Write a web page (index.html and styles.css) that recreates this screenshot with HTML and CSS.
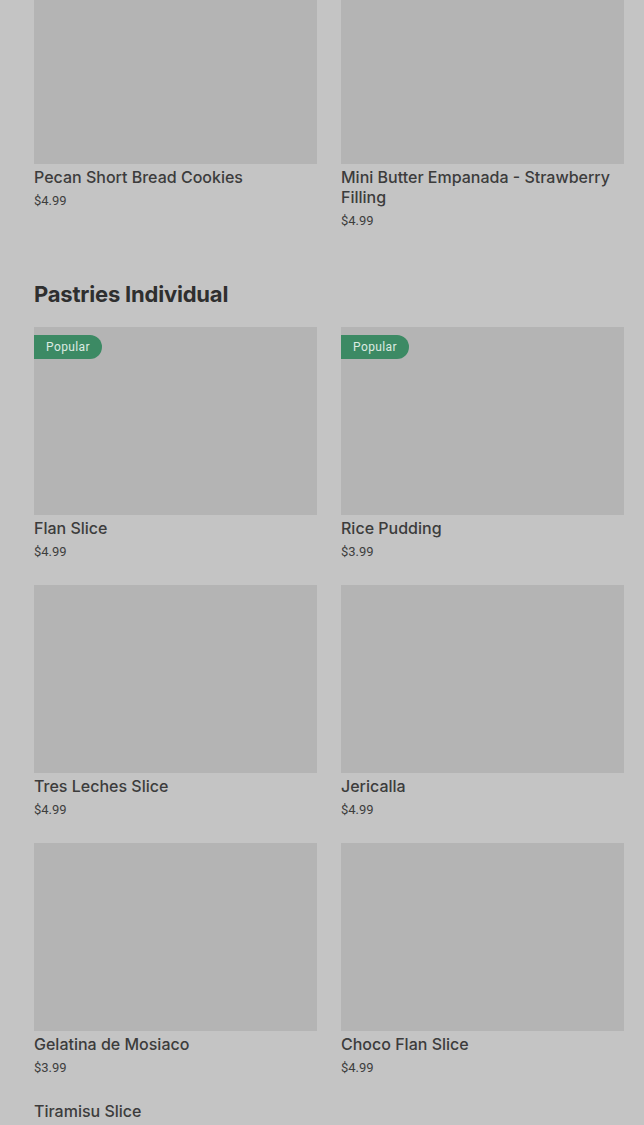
FILE: index.html
```html
<!DOCTYPE html>
<html>
<head>
<meta charset="utf-8">
<link rel="stylesheet" href="styles.css">
</head>
<body>
<div class="page">
  <section class="section">
    <div class="grid">
      <div class="card">
        <div class="thumb"></div>
        <div class="name">Pecan Short Bread Cookies</div>
        <div class="price">$4.99</div>
      </div>
      <div class="card">
        <div class="thumb"></div>
        <div class="name">Mini Butter Empanada - Strawberry Filling</div>
        <div class="price">$4.99</div>
      </div>
    </div>
  </section>
  <section class="section">
    <h2 class="heading">Pastries Individual</h2>
    <div class="grid">
      <div class="card">
        <div class="thumb"><span class="badge">Popular</span></div>
        <div class="name">Flan Slice</div>
        <div class="price">$4.99</div>
      </div>
      <div class="card">
        <div class="thumb"><span class="badge">Popular</span></div>
        <div class="name">Rice Pudding</div>
        <div class="price">$3.99</div>
      </div>
      <div class="card">
        <div class="thumb"></div>
        <div class="name">Tres Leches Slice</div>
        <div class="price">$4.99</div>
      </div>
      <div class="card">
        <div class="thumb"></div>
        <div class="name">Jericalla</div>
        <div class="price">$4.99</div>
      </div>
      <div class="card">
        <div class="thumb"></div>
        <div class="name">Gelatina de Mosiaco</div>
        <div class="price">$3.99</div>
      </div>
      <div class="card">
        <div class="thumb"></div>
        <div class="name">Choco Flan Slice</div>
        <div class="price">$4.99</div>
      </div>
      <div class="card">
        <div class="name first">Tiramisu Slice</div>
        <div class="price">$4.99</div>
      </div>
    </div>
  </section>
</div>
</body>
</html>
```
FILE: styles.css
```css
html, body {
  margin: 0;
  padding: 0;
  background: #c4c4c4;
  overflow: hidden;
}
body {
  font-family: Inter, Roboto, "Liberation Sans", sans-serif;
  color: #3a3a3a;
}
.page {
  margin-top: -24px;
  padding: 0 20px 0 34px;
}
.section + .section {
  margin-top: 48px;
}
.heading {
  margin: 0 0 18px;
  font-family: Inter, "Liberation Sans", sans-serif;
  font-size: 22px;
  line-height: 30px;
  font-weight: 700;
  letter-spacing: -0.2px;
  color: #2f2f2f;
}
.grid {
  display: grid;
  grid-template-columns: 1fr 1fr;
  column-gap: 24px;
  row-gap: 23px;
}
.card {
  display: flex;
  flex-direction: column;
}
.thumb {
  position: relative;
  height: 188px;
  background: #b4b4b4;
}
.badge {
  position: absolute;
  left: 0;
  top: 8px;
  height: 24px;
  line-height: 24px;
  padding: 0 12px;
  background: #3c8a64;
  color: #dcebe2;
  font-family: Roboto, "Liberation Sans", sans-serif;
  font-size: 12px;
  letter-spacing: 0.4px;
  border-radius: 0 12px 12px 0;
}
.name {
  margin-top: 3px;
  font-size: 16px;
  line-height: 20px;
  font-weight: 500;
  color: #3c3c3c;
}
.name.first {
  margin-top: 0;
}
.price {
  margin-top: 4px;
  font-family: Roboto, "Liberation Sans", sans-serif;
  font-size: 13px;
  line-height: 20px;
  letter-spacing: 0;
  color: #3e3e3e;
}
```
